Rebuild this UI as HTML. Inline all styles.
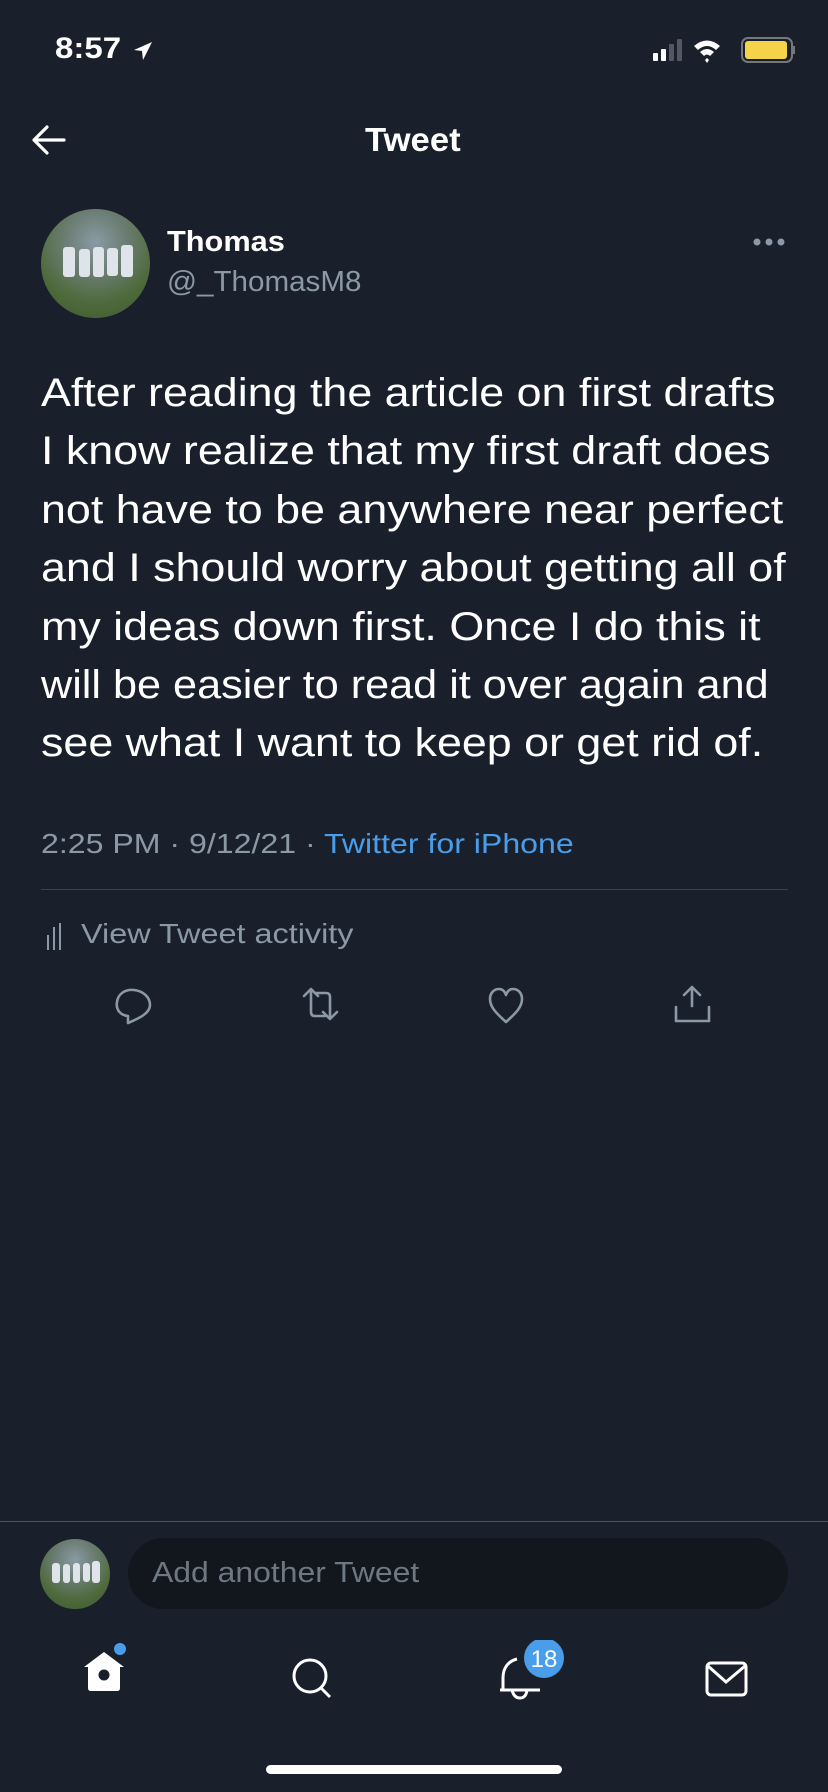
<!DOCTYPE html>
<html><head><meta charset="utf-8"><style>
*{margin:0;padding:0;box-sizing:border-box}
body{width:828px;height:1792px;background:#19202b;font-family:"Liberation Sans",sans-serif;color:#fff;position:relative;overflow:hidden}
.a{position:absolute;white-space:nowrap;transform-origin:0 50%}
.body div{position:absolute;left:41px;font-size:40px;line-height:44px;white-space:nowrap;transform:scaleX(1.12);transform-origin:0 50%}
.av{position:absolute;border-radius:50%;background:radial-gradient(circle at 50% 30%,#8a9aa5 0,#6e7f78 30%,#4f6a3c 65%,#3d5a2c 100%);overflow:hidden}
.av i{position:absolute;background:#dfe3ea;border-radius:3px}
</style></head><body>
<div class="a" style="left:55px;top:32px;font-size:30px;font-weight:bold;transform:scaleX(1.1)">8:57</div>
<svg class="a" style="left:132px;top:40px" width="22" height="22" viewBox="0 0 22 22"><path d="M20 2 L2 10 L10 11 L11 20 Z" fill="#fff"/></svg>
<svg class="a" style="left:650px;top:36px" width="146" height="28" viewBox="0 0 146 28">
<rect x="3" y="17" width="5" height="8" rx="1" fill="#fff"/><rect x="11" y="13" width="5" height="12" rx="1" fill="#fff"/><rect x="19" y="8" width="5" height="17" rx="1" fill="#556"/><rect x="27" y="3" width="5" height="22" rx="1" fill="#556"/>
<path d="M44 10 Q57 -1 70 10 L66 14 Q57 6 48 14 Z M50 16 Q57 10 64 16 L60 20 Q57 17 54 20 Z M57 22 L55 24 57 27 59 24Z" fill="#fff"/>
<rect x="92" y="2" width="50" height="24" rx="6" fill="none" stroke="#777" stroke-width="2"/><rect x="95" y="5" width="42" height="18" rx="3" fill="#f5d44a"/><rect x="143" y="10" width="2" height="8" fill="#777"/></svg>
<svg class="a" style="left:30px;top:124px" width="38" height="32" viewBox="0 0 38 32"><path d="M34 16 H5 M17 3 L4 16 17 29" stroke="#fff" stroke-width="3.2" fill="none" stroke-linecap="round" stroke-linejoin="round"/></svg>
<div class="a" style="left:365px;top:121px;font-size:33px;font-weight:bold;transform:scaleX(1.05)">Tweet</div>
<div class="av" style="left:41px;top:209px;width:109px;height:109px"><i style="left:22px;top:38px;width:12px;height:30px"></i><i style="left:38px;top:40px;width:11px;height:28px"></i><i style="left:52px;top:38px;width:11px;height:30px"></i><i style="left:66px;top:39px;width:11px;height:28px"></i><i style="left:80px;top:36px;width:12px;height:32px"></i></div>
<div class="a" style="left:167px;top:226px;font-size:29px;font-weight:bold;transform:scaleX(1.06)">Thomas</div>
<div class="a" style="left:167px;top:266px;font-size:29px;color:#8b98a5;transform:scaleX(1.02)">@_ThomasM8</div>
<svg class="a" style="left:752px;top:237px" width="34" height="10"><circle cx="5" cy="5" r="3.5" fill="#8b98a5"/><circle cx="17" cy="5" r="3.5" fill="#8b98a5"/><circle cx="29" cy="5" r="3.5" fill="#8b98a5"/></svg>
<div class="body">
<div style="top:371px">After reading the article on first drafts</div>
<div style="top:429px">I know realize that my first draft does</div>
<div style="top:488px">not have to be anywhere near perfect</div>
<div style="top:546px">and I should worry about getting all of</div>
<div style="top:605px">my ideas down first. Once I do this it</div>
<div style="top:663px;transform:scaleX(1.08)">will be easier to read it over again and</div>
<div style="top:721px">see what I want to keep or get rid of.</div>
</div>
<div class="a" style="left:41px;top:828px;font-size:28px;color:#8b98a5;transform:scaleX(1.146)">2:25 PM · 9/12/21 · <span style="color:#4a9de9">Twitter for iPhone</span></div>
<div class="a" style="left:41px;top:889px;width:747px;height:1px;background:#38424e"></div>
<svg class="a" style="left:45px;top:921px" width="20" height="30"><path d="M3 14v15M9 6v23M15 2v27" stroke="#8b98a5" stroke-width="2"/></svg>
<div class="a" style="left:81px;top:918px;font-size:28px;color:#8b98a5;transform:scaleX(1.157)">View Tweet activity</div>
<svg class="a" style="left:0;top:985px" width="828" height="50" fill="none" stroke="#8b98a5" stroke-width="2.6" stroke-linejoin="round" stroke-linecap="round">
<path d="M128 38 L128 31 C118 30 116 22 117 17 C118 9 125 4 134 5 C143 6 150 12 150 20 C150 28 140 33 128 38Z"/>
<path d="M304 11 L311 4 318 11 M311 5 V27 Q311 31 315 31 H325 M337 27 L330 34 323 27 M330 33 V12 Q330 8 326 8 H316"/>
<path d="M506 37 C496 28 490 22 490 14 C490 7 495 4 499 4 C503 4 505 7 506 10 C507 7 509 4 513 4 C517 4 522 7 522 14 C522 22 516 28 506 37Z"/>
<path d="M692 21 V3 M684 10 L692 2 700 10 M676 22 V36 H709 V22"/>
</svg>
<div class="a" style="left:0;top:1521px;width:828px;height:1px;background:#4a5560"></div>
<div class="av" style="left:40px;top:1539px;width:70px;height:70px"><i style="left:12px;top:24px;width:8px;height:20px"></i><i style="left:23px;top:25px;width:7px;height:19px"></i><i style="left:33px;top:24px;width:7px;height:20px"></i><i style="left:43px;top:24px;width:7px;height:19px"></i><i style="left:52px;top:22px;width:8px;height:22px"></i></div>
<div class="a" style="left:128px;top:1538px;width:660px;height:71px;border-radius:36px;background:#12161d"></div>
<div class="a" style="left:152px;top:1557px;font-size:29px;color:#6e7883;transform:scaleX(1.1)">Add another Tweet</div>
<svg class="a" style="left:0;top:1640px" width="828" height="70">
<path d="M84 27 L104 12 124 27 H120 V48 Q120 51 117 51 H91 Q88 51 88 48 V27Z" fill="#fff"/><circle cx="104" cy="35" r="5.5" fill="#19202b"/><circle cx="120" cy="9" r="6" fill="#4a9de9"/>
<g fill="none" stroke="#fff" stroke-width="3"><circle cx="310" cy="36" r="16"/><path d="M321 48 L330 57"/>
<path d="M503 50 V38 C503 27 509 21 517 19 M500 50 H540 M512 50 Q514 58 520 58 Q526 58 527 50"/>
<rect x="707" y="23" width="39" height="32" rx="4"/><path d="M708 26 L726 42 745 26"/></g>
<circle cx="544" cy="18" r="20" fill="#4a9de9"/><text x="544" y="27" text-anchor="middle" font-size="24" fill="#fff" font-family="Liberation Sans">18</text>
</svg>
<div class="a" style="left:266px;top:1765px;width:296px;height:9px;border-radius:5px;background:#fff"></div>
</body></html>
